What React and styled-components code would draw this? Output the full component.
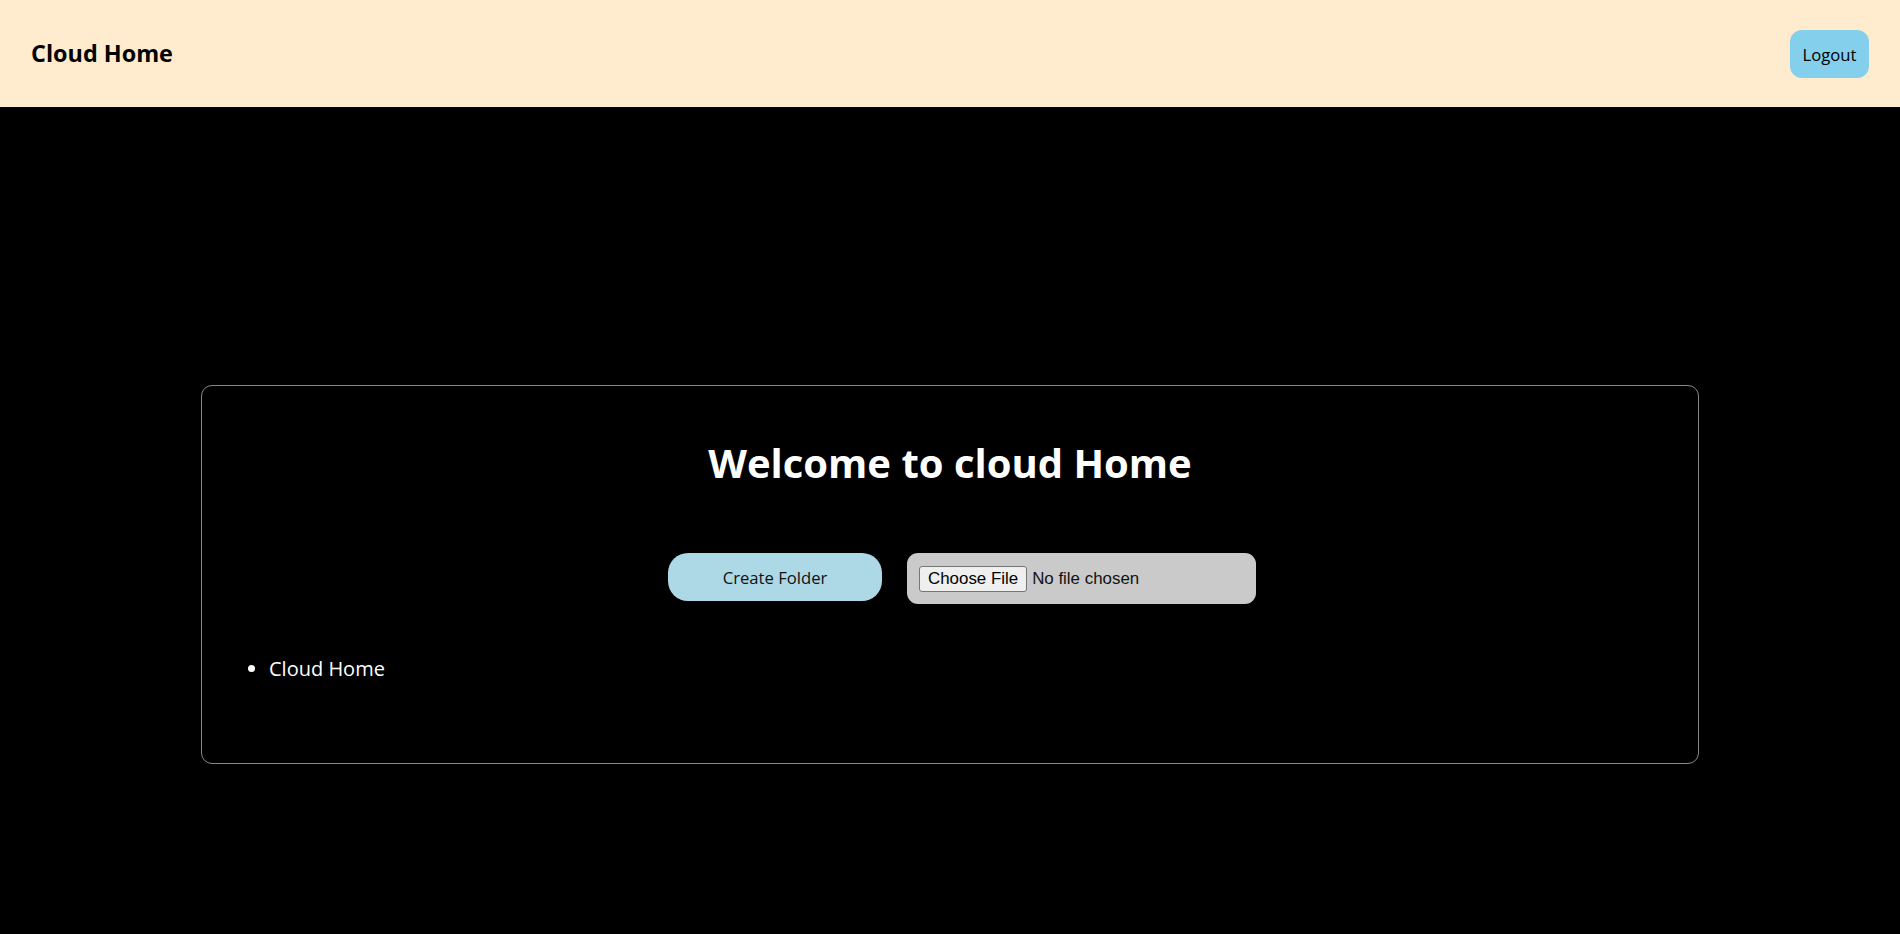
import styled, { createGlobalStyle } from "styled-components";

const GlobalStyle = createGlobalStyle`
    html, body {
        margin: 0;
        padding: 0;
        background-color: #000;
        font-family: "Open Sans", sans-serif;
    }
    #root {
        min-height: 100vh;
        display: flex;
        flex-direction: column;
    }
`

const Navbar = styled.header`
    height: 107px;
    background-color: #ffebcd;
    display: flex;
    justify-content: space-between;
    align-items: center;
    padding: 0 31px;
    box-sizing: border-box;
`

const Brand = styled.div`
    font-size: 23.4px;
    font-weight: 700;
    color: #000;
    margin-top: -1px;
`

const LogoutButton = styled.button`
    width: 79px;
    height: 48px;
    margin-top: 1px;
    border: none;
    border-radius: 12px;
    background-color: #84cfec;
    color: #000;
    font-family: "Open Sans", sans-serif;
    font-size: 16.67px;
    padding: 0;
    cursor: pointer;
`

const Main = styled.main`
    flex: 1;
    padding-top: 278px;
    background-color: #000;
`

const Card = styled.section`
    width: 1498px;
    height: 379px;
    margin: 0 auto;
    box-sizing: border-box;
    border: 1px solid #888;
    border-radius: 11px;
    padding: 24px 24px 0;
`

const Title = styled.h1`
    margin: 26px 0 0;
    text-align: center;
    color: #fff;
    font-size: 40px;
    font-weight: 700;
    line-height: 54px;
`

const Actions = styled.div`
    display: flex;
    justify-content: center;
    align-items: flex-start;
    gap: 25px;
    padding-left: 24px;
    margin-top: 63px;
`

const FolderButton = styled.button`
    width: 214px;
    height: 48px;
    border: none;
    border-radius: 20px;
    background-color: #add8e6;
    color: #111;
    font-family: "Open Sans", sans-serif;
    font-size: 16.67px;
    padding: 0;
    cursor: pointer;
`

const UploadBox = styled.div`
    width: 349px;
    height: 51px;
    box-sizing: border-box;
    display: flex;
    align-items: center;
    padding: 0 12px;
    border-radius: 11px;
    background-color: #cacaca;
`

const FileInput = styled.input`
    font-family: "Liberation Sans", Arial, sans-serif;
    font-size: 16.9px;
    color: #111;

    &::file-selector-button {
        font-family: "Liberation Sans", Arial, sans-serif;
        font-size: 16.9px;
        height: 26px;
        padding: 0 8px;
        margin-right: 5px;
        border: 1px solid #767676;
        border-radius: 3px;
        background-color: #efefef;
        color: #000;
    }
`

const FolderList = styled.ul`
    margin: 51px 0 0;
    padding-left: 43px;
    color: #fff;
    font-size: 20px;
`

const FolderItem = styled.li`
    line-height: 27px;
`

const App = () => {
    return (
        <>
            <GlobalStyle />
            <Navbar>
                <Brand>Cloud Home</Brand>
                <LogoutButton>Logout</LogoutButton>
            </Navbar>
            <Main>
                <Card>
                    <Title>Welcome to cloud Home</Title>
                    <Actions>
                        <FolderButton>Create Folder</FolderButton>
                        <UploadBox>
                            <FileInput type="file" />
                        </UploadBox>
                    </Actions>
                    <FolderList>
                        <FolderItem>Cloud Home</FolderItem>
                    </FolderList>
                </Card>
            </Main>
        </>
    )
}

export default App
